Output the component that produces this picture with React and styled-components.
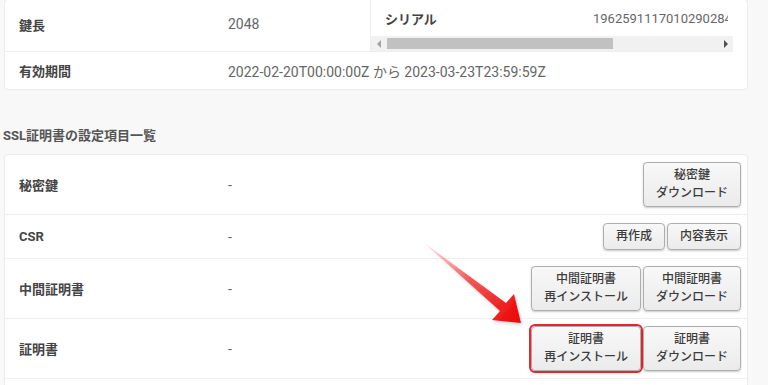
import React from "react";
import styled, { createGlobalStyle } from "styled-components";

const GlobalStyle = createGlobalStyle`
  html, body {
    margin: 0;
    padding: 0;
    background: #f8f8f8;
  }
  body {
    font-family: Roboto, "Noto Sans CJK JP", sans-serif;
    color: #444;
    overflow: hidden;
  }
  * {
    box-sizing: border-box;
  }
`;

const Page = styled.div`
  position: relative;
  width: 768px;
  height: 385px;
  padding: 0 20px 0 4px;
  overflow: hidden;
`;

const Card = styled.div`
  background: #fff;
  border: 1px solid #ececec;
  border-radius: 4px;
  padding-right: ${(p) => p.$padRight || 0}px;
  margin-top: ${(p) => p.$top || 0}px;
`;

const TopRow = styled.div`
  display: grid;
  grid-template-columns: ${(p) => p.$cols};
  align-items: center;
  min-height: ${(p) => p.$height}px;
  border-bottom: ${(p) => (p.$last ? "none" : "1px solid #eeeeee")};
`;

const Label = styled.div`
  padding-left: 14px;
  font-size: 13px;
  font-weight: 700;
  color: #444;
  white-space: nowrap;
  padding-bottom: ${(p) => p.$lift || 0}px;
`;

const Value = styled.div`
  font-size: ${(p) => p.$size || 14}px;
  color: #666;
  white-space: nowrap;
  padding-bottom: ${(p) => p.$lift || 0}px;
`;

const SerialCell = styled.div`
  align-self: stretch;
  border-left: 1px solid #eeeeee;
  display: flex;
  flex-direction: column;
  overflow: hidden;
`;

const SerialRow = styled.div`
  display: grid;
  grid-template-columns: 222px max-content;
  align-items: center;
  height: 36px;
  width: 357px;
  overflow: hidden;
`;

const Scrollbar = styled.div`
  display: flex;
  align-items: center;
  height: 15px;
  background: #f1f1f1;
`;

const ScrollArrow = styled.div`
  width: 15px;
  height: 15px;
  display: flex;
  align-items: center;
  justify-content: center;

  &::before {
    content: "";
    border-top: 4px solid transparent;
    border-bottom: 4px solid transparent;
    ${(p) =>
      p.$dir === "left"
        ? "border-right: 4px solid #a3a3a3;"
        : "border-left: 4px solid #505050;"}
  }
`;

const Thumb = styled.div`
  width: 226px;
  height: 11px;
  background: #c1c1c1;
  margin-left: 1px;
`;

const Spacer = styled.div`
  flex: 1;
`;

const Heading = styled.h2`
  margin: 37px 0 9px -1px;
  font-size: 13px;
  line-height: 18px;
  font-weight: 700;
  color: #555;
`;

const SettingRow = styled.div`
  display: grid;
  grid-template-columns: 223px 1fr auto;
  align-items: center;
  min-height: 44px;
  padding: 7px 6px 7px 0;
  border-bottom: 1px solid #eeeeee;
`;

const ButtonGroup = styled.div`
  display: flex;
  gap: 2px;
`;

const Button = styled.button`
  font-family: Roboto, "Noto Sans CJK JP", sans-serif;
  font-size: 12px;
  font-weight: 500;
  line-height: 17.5px;
  color: #3c3c3c;
  padding: 4px 12px;
  background: linear-gradient(#f8f8f8, #ebebeb);
  border: 1px solid #adadad;
  border-radius: 4px;
  box-shadow: 0 1px 2px rgba(0, 0, 0, 0.22);
  white-space: nowrap;
  cursor: pointer;
  outline: ${(p) => (p.$highlight ? "2px solid #e8262b" : "none")};
  outline-offset: 0;
`;

const ArrowLayer = styled.svg`
  position: absolute;
  left: 0;
  top: 0;
  pointer-events: none;
`;

const settings = [
  { label: "秘密鍵", buttons: [["秘密鍵", "ダウンロード"]] },
  { label: "CSR", buttons: [["再作成"], ["内容表示"]] },
  {
    label: "中間証明書",
    buttons: [
      ["中間証明書", "再インストール"],
      ["中間証明書", "ダウンロード"],
    ],
  },
  {
    label: "証明書",
    buttons: [
      ["証明書", "再インストール"],
      ["証明書", "ダウンロード"],
    ],
    highlight: 0,
  },
];

function Pointer() {
  return (
    <ArrowLayer width="768" height="385" viewBox="0 0 768 385">
      <defs>
        <linearGradient id="arrowFill" x1="423" y1="243" x2="515" y2="318" gradientUnits="userSpaceOnUse">
          <stop offset="0" stopColor="#ff6a6a" stopOpacity="0.15" />
          <stop offset="0.5" stopColor="#f03636" stopOpacity="0.8" />
          <stop offset="1" stopColor="#ee0a0a" />
        </linearGradient>
        <filter id="soft" x="-20%" y="-20%" width="140%" height="140%">
          <feDropShadow dx="1" dy="2" stdDeviation="1.5" floodColor="#000" floodOpacity="0.18" />
        </filter>
      </defs>
      <polygon
        points="423,242 506,303 514,294 521,323 492,320 500,311"
        fill="url(#arrowFill)"
        filter="url(#soft)"
      />
    </ArrowLayer>
  );
}

export default function App() {
  return (
    <>
      <GlobalStyle />
      <Page>
        <Card $top={-1} $padRight={14}>
          <TopRow $cols="223px 142px 363px" $height={52}>
            <Label $lift={3}>鍵長</Label>
            <Value $lift={3}>2048</Value>
            <SerialCell>
              <SerialRow>
                <Label>シリアル</Label>
                <Value $size={13}>1962591117010290284</Value>
              </SerialRow>
              <Scrollbar>
                <ScrollArrow $dir="left" />
                <Thumb />
                <Spacer />
                <ScrollArrow $dir="right" />
              </Scrollbar>
            </SerialCell>
          </TopRow>
          <TopRow $cols="223px 1fr" $height={37} $last>
            <Label>有効期間</Label>
            <Value>2022-02-20T00:00:00Z から 2023-03-23T23:59:59Z</Value>
          </TopRow>
        </Card>

        <Heading>SSL証明書の設定項目一覧</Heading>

        <Card>
          {settings.map((s) => (
            <SettingRow key={s.label}>
              <Label>{s.label}</Label>
              <Value>-</Value>
              <ButtonGroup>
                {s.buttons.map((lines, i) => (
                  <Button key={i} $highlight={s.highlight === i}>
                    {lines.map((l, j) => (
                      <React.Fragment key={j}>
                        {j > 0 && <br />}
                        {l}
                      </React.Fragment>
                    ))}
                  </Button>
                ))}
              </ButtonGroup>
            </SettingRow>
          ))}
          <SettingRow>
            <Label />
            <Value />
          </SettingRow>
        </Card>

        <Pointer />
      </Page>
    </>
  );
}
